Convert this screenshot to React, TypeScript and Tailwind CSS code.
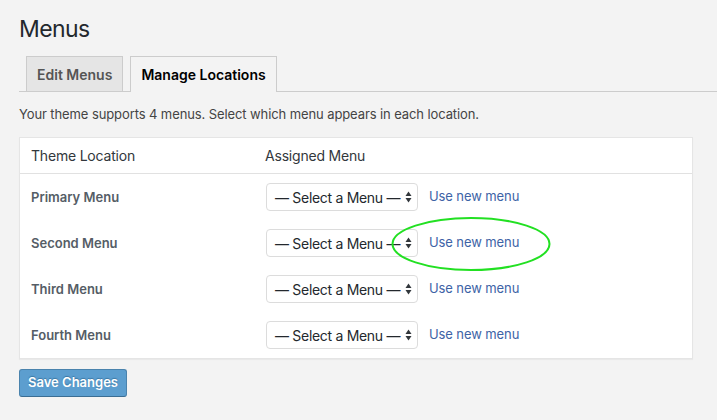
import React from "react";

function Arrows() {
  return (
    <svg width="7" height="12" viewBox="0 0 7 12" className="shrink-0">
      <path d="M3.5 0.5 L6.5 5 L0.5 5 Z" fill="#32373c" />
      <path d="M0.5 7 L6.5 7 L3.5 11.5 Z" fill="#32373c" />
    </svg>
  );
}

function Row({ label }: { label: string }) {
  return (
    <div className="flex h-[46px] items-center">
      <div className="w-[245px] pl-[11px] pt-px text-[13px] font-semibold text-[#555d66]">{label}</div>
      <div className="ml-px flex h-[28px] w-[152px] items-center justify-between rounded-[4px] border border-[#dcdcdc] bg-white pl-[8px] pr-[5px] text-[14px] tracking-[-0.3px] whitespace-nowrap text-[#23282d]">
        <span>— Select a Menu —</span>
        <Arrows />
      </div>
      <a className="ml-[11px] text-[13px] tracking-[-0.1px] text-[#3d63a6]">Use new menu</a>
    </div>
  );
}

export default function App() {
  return (
    <div
      className="relative h-[420px] w-[717px] overflow-hidden bg-[#f3f3f3]"
      style={{ fontFamily: "Inter, 'Open Sans', sans-serif" }}
    >
      <h1 className="pl-[19px] pt-[15px] text-[23px] leading-[29px] tracking-[-0.6px] text-[#23282d]">Menus</h1>
      <div className="ml-[19px] mt-[12px] flex items-end gap-[7px] border-b border-[#cccccc] pl-[7px]">
        <div className="flex h-[35px] items-center border border-b-0 border-[#cccccc] bg-[#e5e5e5] px-[10px] text-[14px] font-semibold text-[#555555]">
          Edit Menus
        </div>
        <div className="-mb-px flex h-[36px] items-center border border-b-0 border-[#cccccc] bg-[#f3f3f3] px-[10px] pb-px text-[14px] font-semibold text-[#000000]">
          Manage Locations
        </div>
      </div>
      <p className="ml-[19px] mt-[12px] text-[13px] leading-[20px] tracking-[-0.1px] text-[#444444]">
        Your theme supports 4 menus. Select which menu appears in each location.
      </p>
      <div className="ml-[19px] mt-[13px] w-[674px] border border-[#e5e5e5] bg-white shadow-[0_1px_1px_rgba(0,0,0,0.04)]">
        <div className="flex h-[36px] items-center border-b border-[#e1e1e1] text-[14px] tracking-[-0.2px] text-[#32373c]">
          <div className="w-[245px] pl-[11px]">Theme Location</div>
          <div>Assigned Menu</div>
        </div>
        <Row label="Primary Menu" />
        <Row label="Second Menu" />
        <Row label="Third Menu" />
        <Row label="Fourth Menu" />
      </div>
      <button className="ml-[19px] mt-[10px] flex h-[28px] w-[108px] items-center justify-center rounded-[3px] border border-[#4a83ad] border-b-[#3a6d93] bg-[#5c9ecf] text-[13px] font-semibold text-white [text-shadow:0_-1px_1px_#3b77a3]">
        Save Changes
      </button>
      <svg className="absolute left-[391px] top-[216px]" width="162" height="57" viewBox="0 0 162 57">
        <ellipse cx="80" cy="28" rx="78.5" ry="26" fill="none" stroke="#22e022" strokeWidth="2" />
      </svg>
    </div>
  );
}
